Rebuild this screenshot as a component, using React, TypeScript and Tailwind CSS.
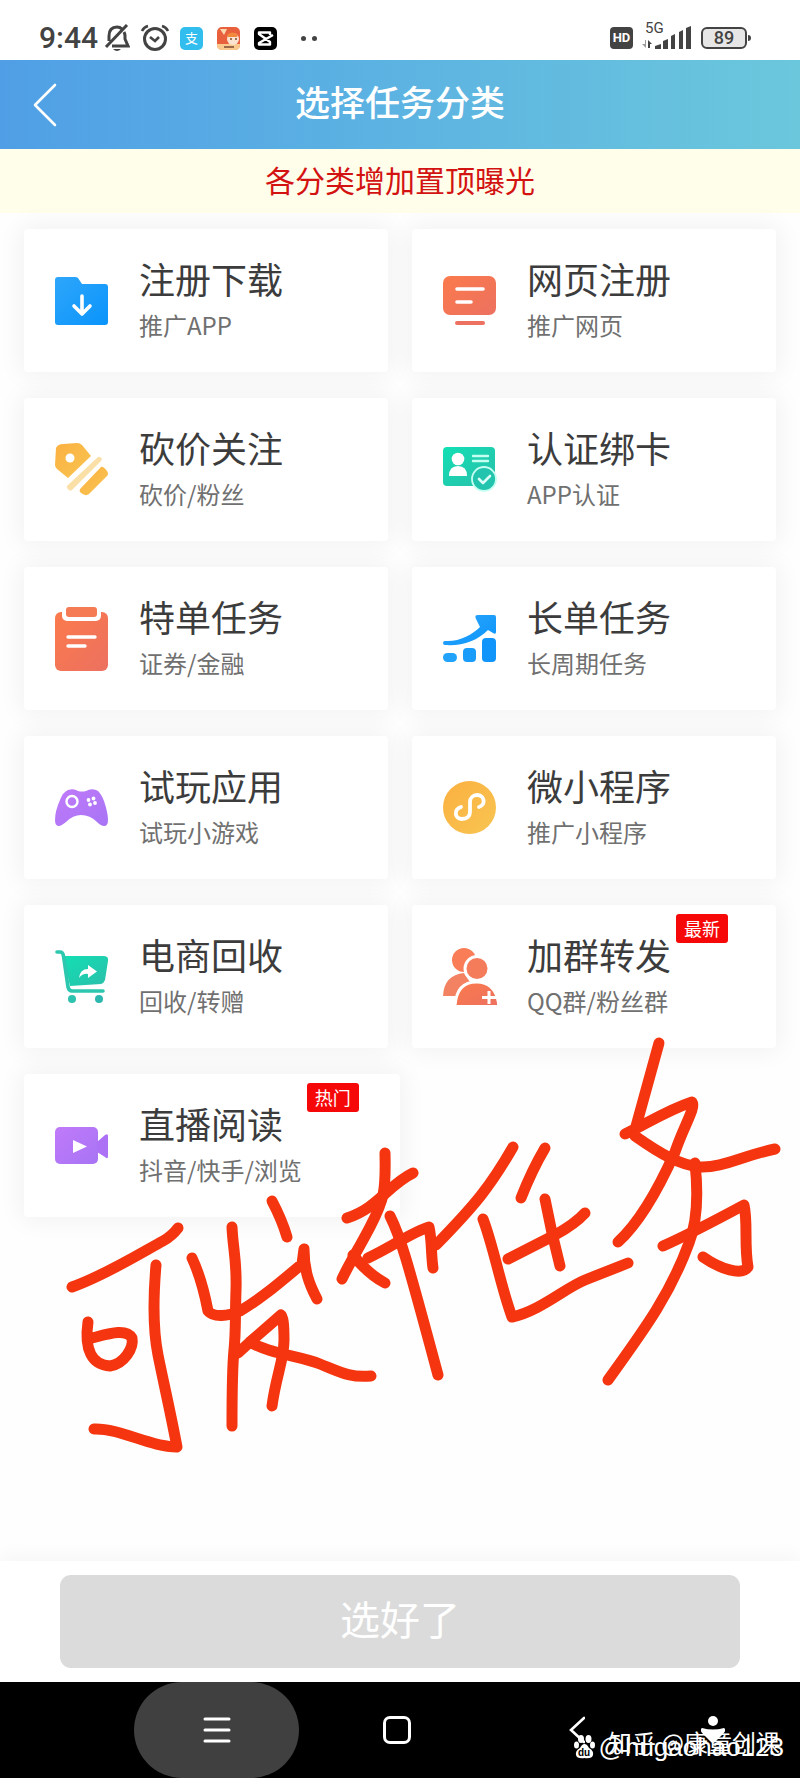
import React, { useState } from "react";

interface Category {
  id: string;
  title: string;
  desc: string;
  icon: React.ReactNode;
  badge?: string;
  wide?: boolean;
}

const white = { fill: "none", stroke: "#fff", strokeLinecap: "round", strokeLinejoin: "round" } as const;

function Icon({ height, children }: { height: number; children: React.ReactNode }) {
  return (
    <svg width="54" height={height} viewBox={`0 0 54 ${height}`} className="shrink-0" aria-hidden="true">
      {children}
    </svg>
  );
}

/* Gradients shared by all category icons */
function IconGradients() {
  const stops = [
    ["blue", "#2ea6fb", "#0a94fb"],
    ["orange", "#fb7a4c", "#ec7160"],
    ["yellow", "#fbb040", "#f8c552"],
    ["teal", "#12dfb4", "#2bbfa9"],
    ["purple", "#c07af9", "#a774f5"],
  ];
  return (
    <svg width="0" height="0" className="absolute" aria-hidden="true">
      <defs>
        {stops.map(([id, from, to]) => (
          <linearGradient key={id} id={id} x1="0" y1="0" x2="1" y2="1">
            <stop offset="0" stopColor={from} />
            <stop offset="1" stopColor={to} />
          </linearGradient>
        ))}
      </defs>
    </svg>
  );
}

const categories: Category[] = [
  {
    id: "download",
    title: "注册下载",
    desc: "推广APP",
    icon: (
      <Icon height={48}>
        <path
          fill="url(#blue)"
          d="M3 0H20Q22 0 23 1L27 7H50Q53 7 53 10V45Q53 48 50 48H3Q0 48 0 45V3Q0 0 3 0Z"
        />
        <path {...white} strokeWidth="3.6" d="M27 19V36M19 29L27 37L35 29" />
      </Icon>
    ),
  },
  {
    id: "web",
    title: "网页注册",
    desc: "推广网页",
    icon: (
      <Icon height={49}>
        <rect width="53" height="39" rx="7" fill="url(#orange)" />
        <path {...white} strokeWidth="3.6" d="M14 13H40M14 26H28" />
        <rect x="12" y="45" width="30" height="4" rx="2" fill="#ec7160" />
      </Icon>
    ),
  },
  {
    id: "bargain",
    title: "砍价关注",
    desc: "砍价/粉丝",
    icon: (
      <Icon height={53}>
        <path
          fill="url(#yellow)"
          d="M1 5Q3 1 8 1L22 0Q25 0 27 2L36 13L13 35L2 26Q0 24 0 22Z"
        />
        <circle cx="15" cy="15" r="4.5" fill="#fff" />
        <path fill="#fadfa6" d="M43 14Q45 13 47 16L46 18L17 47Q15 49 12 45Q11 43 13 42Z" />
        <path fill="url(#yellow)" d="M46 24Q48 23 52 28Q54 31 52 33L34 51Q30 54 25 49Q24 47 26 45Z" />
      </Icon>
    ),
  },
  {
    id: "verify",
    title: "认证绑卡",
    desc: "APP认证",
    icon: (
      <Icon height={45}>
        <rect width="52" height="39" rx="4" fill="url(#teal)" />
        <circle cx="15" cy="12" r="6.3" fill="#fff" />
        <path fill="#fff" d="M6 29Q6 19 15 19Q24 19 24 29Z" />
        <path {...white} stroke="#c4fff2" strokeWidth="2.4" d="M30 9H45M30 14H45" />
        <circle cx="41" cy="32" r="12" fill="#22c4ae" stroke="#c4fff2" strokeWidth="1.8" />
        <path {...white} stroke="#d9fff8" strokeWidth="2.6" d="M36 32L40 36L47 29" />
      </Icon>
    ),
  },
  {
    id: "special",
    title: "特单任务",
    desc: "证券/金融",
    icon: (
      <Icon height={64}>
        <rect y="5" width="53" height="59" rx="6" fill="url(#orange)" />
        <rect x="7" y="-4" width="39" height="18" rx="5" fill="#fff" />
        <rect x="11" width="31" height="10" rx="3" fill="#f47b54" />
        <path {...white} strokeWidth="3.4" d="M13 30H40M13 39H30" />
      </Icon>
    ),
  },
  {
    id: "long",
    title: "长单任务",
    desc: "长周期任务",
    icon: (
      <Icon height={48}>
        <path
          fill="url(#blue)"
          d="M2 26C16 27 29 20 37 12L33 4Q31 0 35 0H51Q53 0 53 2V17Q53 20 50 18L45 15C34 26 20 31 2 30Q0 30 0 28Q0 26 2 26Z"
        />
        <rect y="38" width="14" height="9" rx="4.5" fill="#22a3fb" />
        <rect x="20" y="33" width="13" height="14" rx="4" fill="#1a9cfb" />
        <rect x="39" y="23" width="14" height="24" rx="4" fill="#1195fb" />
      </Icon>
    ),
  },
  {
    id: "trial",
    title: "试玩应用",
    desc: "试玩小游戏",
    icon: (
      <Icon height={37}>
        <path
          fill="url(#purple)"
          d="M13 1Q19 -1 23 2Q27 3 31 2Q36 -1 41 1Q45 2 49 12Q53 24 53 31Q53 37 49 37Q46 37 42 33Q35 26 26 26Q18 26 11 33Q6 37 4 37Q0 37 0 31Q0 22 5 11Q8 3 13 1Z"
        />
        <circle {...white} cx="17" cy="12.5" r="5.5" strokeWidth="2.4" />
        <g fill="#fff">
          <circle cx="33.5" cy="11" r="1.9" />
          <circle cx="38.5" cy="9.5" r="1.9" />
          <circle cx="35" cy="15.5" r="1.9" />
          <circle cx="40" cy="14" r="1.9" />
        </g>
      </Icon>
    ),
  },
  {
    id: "mini",
    title: "微小程序",
    desc: "推广小程序",
    icon: (
      <Icon height={53}>
        <circle cx="26.5" cy="26.5" r="26.5" fill="url(#yellow)" />
        <path
          {...white}
          strokeWidth="3.8"
          d="M18 26C10 29 12 38 19 38C24 38 27 35 27 31V21C27 17 30 14 34 14C42 14 43 24 36 26"
        />
      </Icon>
    ),
  },
  {
    id: "shop",
    title: "电商回收",
    desc: "回收/转赠",
    icon: (
      <Icon height={54}>
        <path fill="url(#teal)" d="M8 6H48Q54 6 53 11L50 30Q49 33 46 34L15 36Z" />
        <path
          fill="none"
          stroke="#2cc7ae"
          strokeWidth="3.6"
          strokeLinecap="round"
          strokeLinejoin="round"
          d="M2 2H5Q8 2 8.5 6L13 37Q14 41 17 41H48"
        />
        <circle cx="17" cy="49" r="4" fill="#2cc2ae" />
        <circle cx="44" cy="49" r="4" fill="#2cb8ae" />
        <path fill="#fff" d="M24 28Q25 19 33 19V15L42 21.5L33 28V24Q28 23 24 28Z" />
      </Icon>
    ),
  },
  {
    id: "group",
    title: "加群转发",
    desc: "QQ群/粉丝群",
    badge: "最新",
    icon: (
      <Icon height={57}>
        <circle cx="21" cy="12" r="12" fill="#f97d57" />
        <path fill="#f38262" d="M0 48Q1 27 21 25L36 48Z" />
        <path fill="url(#orange)" stroke="#fff" strokeWidth="3" d="M12 59Q13 34 33.5 34Q54 34 56 59Z" />
        <circle cx="34" cy="20.5" r="12" fill="#f47c5b" stroke="#fff" strokeWidth="3" />
        <path stroke="#fff" strokeWidth="3" d="M39 49.5H53M46 43V56" />
      </Icon>
    ),
  },
  {
    id: "live",
    title: "直播阅读",
    desc: "抖音/快手/浏览",
    badge: "热门",
    wide: true,
    icon: (
      <Icon height={37}>
        <rect width="43" height="37" rx="5" fill="url(#purple)" />
        <path fill="#ac71f5" d="M42 15L50 8Q53 6 53 9V29Q53 33 50 30L42 25Z" />
        <path fill="#fff" d="M18 13L32 19.5L18 26Z" />
      </Icon>
    ),
  },
];

function StatusBar() {
  return (
    <div className="flex h-[60px] items-center justify-between bg-white pt-4 pr-[53px] pl-[39px] text-[#434343]">
      <div className="flex items-center">
        <span className="font-['Roboto',sans-serif] text-[30px] leading-8 font-medium">9:44</span>
        <svg width="26" height="28" viewBox="0 0 26 28" className="ml-1.5" fill="none" stroke="#434343" strokeWidth="3" aria-hidden="true">
          <path d="M2 23L23 1M20 8Q21 10 21 12V15L24 22H8M5 17V12Q5 3 13 3Q16 3 18 5" />
          <path d="M9 25Q13 29 17 25Z" fill="#434343" stroke="none" />
        </svg>
        <svg width="30" height="28" viewBox="0 0 30 28" className="ml-2.5" fill="none" stroke="#434343" strokeWidth="3" aria-hidden="true">
          <circle cx="15" cy="15" r="10.5" />
          <path d="M10 13L15 17L19 13" strokeWidth="2.6" />
          <path d="M2 7Q4 3 8 2M28 7Q26 3 22 2" strokeWidth="2.6" />
        </svg>
        <span className="ml-2.5 flex size-[23px] items-center justify-center rounded-[5px] bg-[#31bdee] text-[13px] leading-4 text-white">
          支
        </span>
        <svg width="23" height="23" viewBox="0 0 23 23" className="ml-3.5" aria-hidden="true">
          <rect width="23" height="23" rx="5" fill="#e9603c" />
          <path d="M0 17H23V18Q23 23 18 23H5Q0 23 0 18Z" fill="#f9c98e" />
          <path d="M3 2H10L7 8Z" fill="#fbd9b0" />
          <circle cx="16" cy="12" r="6" fill="#fbe3cf" />
          <path d="M10 8Q15 3 21 8L20 10H11Z" fill="#f28a3c" />
          <path d="M13 12H15M18 12H20M7 20H17" stroke="#7a4a35" strokeWidth="1.6" />
        </svg>
        <svg width="23" height="23" viewBox="0 0 23 23" className="ml-3.5" aria-hidden="true">
          <rect width="23" height="23" rx="5" fill="#000" />
          <path
            d="M19 8L5 16V17.5H16V15L5 7V5.5H16V8"
            fill="none"
            stroke="#fff"
            strokeWidth="2.4"
            strokeLinejoin="round"
          />
        </svg>
        <span className="ml-6 flex gap-1.5">
          <i className="size-[5px] rounded-full bg-[#434343]" />
          <i className="size-[5px] rounded-full bg-[#434343]" />
        </span>
      </div>
      <div className="flex items-center">
        <span className="flex h-[22px] w-[23px] items-center justify-center rounded bg-[#434343] font-['Roboto',sans-serif] text-[13px] leading-4 font-bold text-white">
          HD
        </span>
        <div className="relative ml-2 h-7 w-[52px]">
          <span className="absolute -top-1 left-1 font-['Roboto',sans-serif] text-[15px] leading-4">5G</span>
          <svg width="52" height="28" viewBox="0 0 52 28" fill="#434343" aria-hidden="true">
            <path d="M4 16H5V24L1 20H4Z" fill="#9a9a9a" />
            <path d="M7 24V16L11 20H9V24Z" />
            <path d="M14 25V22L20 20V25ZM22 25V17L27 15V25ZM30 25V12L34 10V25ZM38 25V8L42 6V25ZM45 25V4L50 2V25Z" />
          </svg>
        </div>
        <span className="relative ml-2 flex h-[22px] w-[46px] items-center justify-center rounded-md border-2 border-[#434343] bg-[#e6e6e6] font-['Roboto',sans-serif] text-[18px] leading-5 font-medium">
          89
          <i className="absolute -right-1.5 h-1.5 w-[3px] rounded-r bg-[#434343]" />
        </span>
      </div>
    </div>
  );
}

/* Freehand red pen note on top of the list */
function PenNote() {
  return (
    <svg
      role="img"
      aria-label="可发布任务"
      width="730"
      height="430"
      viewBox="60 1030 730 430"
      className="pointer-events-none absolute top-[817px] left-[60px]"
      fill="none"
      stroke="#f5350f"
      strokeWidth="11"
      strokeLinecap="round"
      strokeLinejoin="round"
    >
      <path d="M72 1287C106 1275 146 1250 163 1241Q172 1236 178 1228" />
      <path d="M156 1265C153 1300 153 1330 158 1355S170 1410 177 1447C150 1447 120 1428 94 1429" />
      <path d="M88 1322C84 1350 92 1365 110 1366C124 1364 134 1348 132 1338C126 1328 108 1334 92 1338" />
      <path d="M192 1258C200 1275 204 1290 208 1311C214 1318 228 1316 240 1311C262 1298 278 1284 302 1264L304 1249C304 1270 309 1284 317 1299" />
      <path d="M232 1227C233 1250 237 1260 236 1290S236 1330 234 1350S232 1400 232 1426" />
      <path d="M272 1201Q282 1220 287 1237" />
      <path d="M238 1353L250 1342L281 1315Q284 1317 284 1340C284 1360 276 1376 272 1406" />
      <path d="M250 1342C270 1354 300 1356 320 1364S350 1378 371 1376" />
      <path d="M385 1153C386 1192 384 1200 370 1227C358 1250 350 1262 342 1279" />
      <path d="M347 1218C378 1208 388 1185 413 1173" />
      <path d="M353 1255Q368 1274 385 1283" />
      <path d="M368 1258C390 1248 412 1232 429 1227C432 1240 431 1255 433 1268" />
      <path d="M390 1216C400 1236 405 1252 438 1375" />
      <path d="M513 1147C490 1187 475 1205 436 1245" />
      <path d="M483 1219C494 1248 500 1284 512 1317C540 1311 565 1288 585 1280L628 1263" />
      <path d="M545 1148Q532 1170 521 1198" />
      <path d="M508 1259L555 1235Q575 1224 585 1213" />
      <path d="M545 1199L552 1233L560 1266" />
      <path d="M659 1043L635 1130L625 1134C645 1125 665 1111 692 1102C696 1108 684 1125 675 1152C658 1190 640 1222 618 1242" />
      <path d="M635 1136C662 1155 680 1165 700 1167C722 1168 742 1156 775 1149" />
      <path d="M695 1163C699 1200 696 1225 689 1243C670 1295 644 1330 608 1380" />
      <path d="M663 1246C690 1234 718 1219 744 1205C748 1222 744 1245 748 1267C742 1276 720 1269 703 1257" />
    </svg>
  );
}

function NavBar() {
  return (
    <nav className="relative flex h-24 gap-[15px] bg-black pl-[134px]">
      <button aria-label="最近任务" className="flex w-[165px] items-center justify-center rounded-full bg-[#404040]">
        <svg width="28" height="28" viewBox="0 0 28 28" stroke="#fff" strokeWidth="3" strokeLinecap="round">
          <path d="M2 3H26M2 14H26M2 25H26" />
        </svg>
      </button>
      <button aria-label="主页" className="flex w-[165px] items-center justify-center">
        <span className="size-7 rounded-[7px] border-[3px] border-white" />
      </button>
      <button aria-label="返回桌面" className="flex w-[165px] items-center justify-center">
        <svg width="16" height="28" viewBox="0 0 16 28" fill="none" stroke="#fff" strokeWidth="2.6" strokeLinecap="round">
          <path d="M15 2L2 14L15 26" />
        </svg>
      </button>
      <button aria-label="无障碍" className="mr-[75px] ml-auto flex items-center justify-center">
        <svg width="24" height="28" viewBox="0 0 24 28" fill="#fff">
          <circle cx="12" cy="5" r="5" />
          <path d="M1 12Q12 15 23 12Q26 14 22 18L14 26Q12 28 10 26L2 18Q-2 14 1 12Z" />
        </svg>
      </button>
      {/* Watermarks */}
      <span className="absolute right-5 bottom-5 text-[24px] leading-8 whitespace-nowrap text-white">
        知乎 @康童创课
      </span>
      <span className="absolute right-4 bottom-[15px] flex items-center gap-1 font-['Liberation_Sans',sans-serif] text-[26px] leading-8 whitespace-nowrap text-white">
        <span className="relative flex h-6 w-[21px] items-end justify-center">
          <svg width="21" height="24" viewBox="0 0 21 24" fill="#fff" className="absolute top-0 left-0" aria-hidden="true">
            <ellipse cx="7" cy="4" rx="3" ry="4" />
            <ellipse cx="14.5" cy="4" rx="3" ry="4" />
            <ellipse cx="2.5" cy="10" rx="2.5" ry="3.5" />
            <ellipse cx="18.5" cy="10" rx="2.5" ry="3.5" />
            <path d="M10.5 9Q13 9 15 13Q20 16 19 20Q18 24 10.5 23Q3 24 2 20Q1 16 6 13Q8 9 10.5 9Z" />
          </svg>
          <span className="relative text-[10px] leading-3 font-bold text-black">du</span>
        </span>
        @hugaohao123
      </span>
    </nav>
  );
}

export default function App() {
  const [selected, setSelected] = useState<string | null>(null);

  return (
    <div className="flex min-h-screen flex-col overflow-x-hidden bg-[#fefefe] font-['Noto_Sans_CJK_SC',sans-serif]">
      <IconGradients />
      <StatusBar />

      <header className="relative flex h-[89px] items-center justify-center bg-linear-to-r from-[#509fe6] to-[#6bc7dc]">
        <button aria-label="返回" className="absolute left-[33px]">
          <svg width="24" height="44" viewBox="0 0 24 44" fill="none" stroke="#fff" strokeWidth="2.6" strokeLinecap="round" strokeLinejoin="round">
            <path d="M22 2L2 22L22 42" />
          </svg>
        </button>
        <h1 className="pb-2 text-[35px] leading-12 font-medium text-white">选择任务分类</h1>
      </header>

      <p className="bg-[#fffeeb] pt-1.5 pb-2.5 text-center text-[30px] leading-12 text-[#d31212]">
        各分类增加置顶曝光
      </p>

      <main className="relative flex-1 px-6 pt-4 pb-10">
        <div className="grid grid-cols-2 gap-x-6 gap-y-[26px]">
          {categories.map((item) => (
            <button
              key={item.id}
              aria-pressed={selected === item.id}
              onClick={() => setSelected(item.id)}
              className={`flex h-[143px] items-center gap-[30px] rounded bg-white pl-[31px] text-left shadow-[0_0_24px_4px_rgba(0,0,0,0.05)] ${
                item.wide ? "-mr-3" : ""
              }`}
            >
              {item.icon}
              <span className="relative flex flex-col gap-[7px] pb-1.5">
                <span className="text-[36px] leading-12 text-[#3c3c3c]">{item.title}</span>
                <span className="text-[24px] leading-8 text-[#707070]">{item.desc}</span>
                {item.badge && (
                  <span className="absolute -top-4 left-full ml-[5px] rounded-[3px] bg-[#f60808] px-2 text-[18px] leading-[29px] whitespace-nowrap text-white">
                    {item.badge}
                  </span>
                )}
              </span>
            </button>
          ))}
        </div>
        <PenNote />
      </main>

      <footer className="bg-white px-[60px] py-3.5 shadow-[0_-4px_20px_rgba(0,0,0,0.04)]">
        <button className="h-[93px] w-full rounded-[11px] bg-[#dbdbdb] pb-2 text-[40px] text-white">
          选好了
        </button>
      </footer>
      <NavBar />
    </div>
  );
}
